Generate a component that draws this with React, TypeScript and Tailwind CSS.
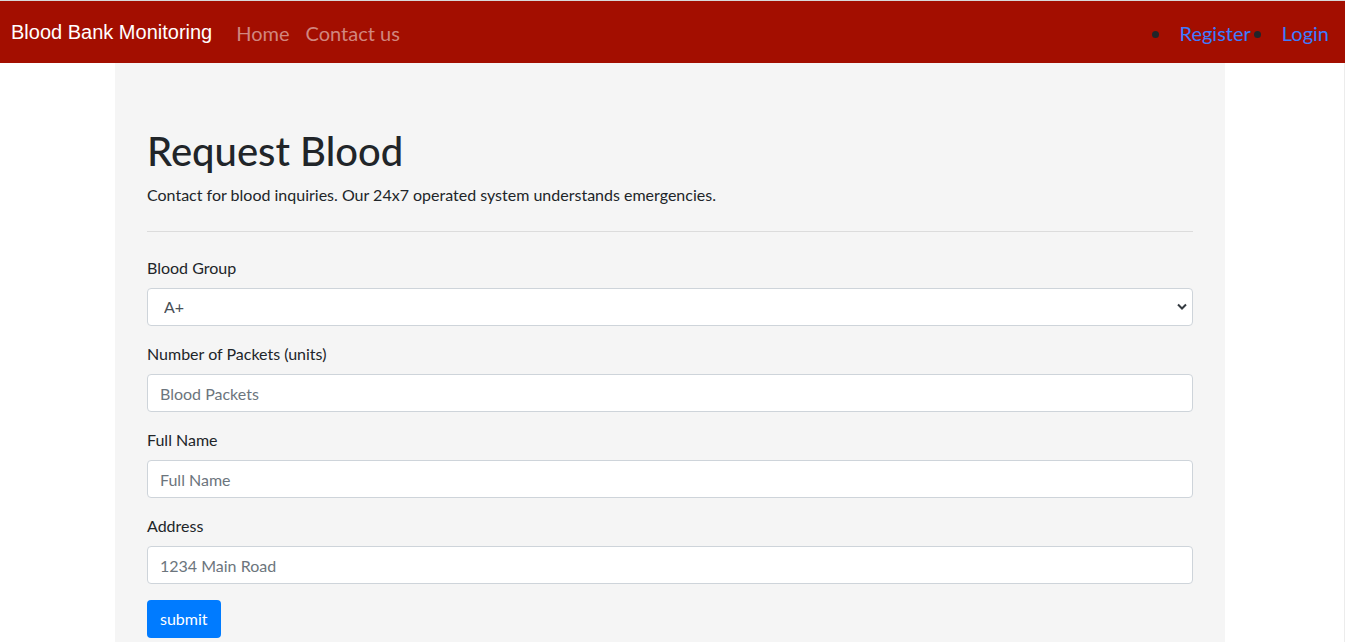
import React from 'react';

const FONT = "font-['Lato',sans-serif]";

const FIELDS = [
  { label: 'Number of Packets (units)', placeholder: 'Blood Packets' },
  { label: 'Full Name', placeholder: 'Full Name' },
  { label: 'Address', placeholder: '1234 Main Road' },
];

const Navbar = () => (
  <nav className="flex h-[62px] items-center bg-[#a30e00] pl-[11px] pr-2 pt-[2px]">
    <a className="mr-4 -mt-[2px] font-['Liberation_Sans',Arial,sans-serif] text-[20px] leading-[30px] text-white">
      Blood Bank Monitoring
    </a>
    <ul className="flex text-[20px]">
      <li><a className="block px-2 text-[#d1867f]">Home</a></li>
      <li><a className="block px-2 text-[#d1867f]">Contact us</a></li>
    </ul>
    <ul className="ml-auto flex list-disc text-[20px] text-[#212529]">
      <li className="ml-[20px]"><a className="block px-2 text-[#3d7bff]">Register</a></li>
      <li className="ml-[15px]"><a className="block px-2 text-[#3d7bff]">Login</a></li>
    </ul>
  </nav>
);

const Field = ({ label, placeholder }: { label: string; placeholder: string }) => (
  <div className="mb-4">
    <label className="mb-2 block">{label}</label>
    <input
      type="text"
      placeholder={placeholder}
      className="block h-[38px] w-full rounded-[4px] border border-[#ced4da] bg-white px-3 text-[#495057] placeholder:text-[#6c757d] outline-none"
    />
  </div>
);

export default function App() {
  return (
    <div className={`${FONT} min-h-[642px] border-t border-[#d8d8d8] bg-white text-[16px] leading-6 text-[#212529]`}>
      <Navbar />
      <div className="border-r border-[#ececec]">
        <div className="ml-[115px] w-[1110px] bg-[#f5f5f5] px-8 pt-16 pb-8">
          <h1 className="mb-2 text-[40px] font-medium leading-[48px]">Request Blood</h1>
          <p>Contact for blood inquiries. Our 24x7 operated system understands emergencies.</p>
          <hr className="my-6 border-t border-black/10" />
          <form>
            <div className="mb-4">
              <label className="mb-2 block">Blood Group</label>
              <div className="relative">
                <select className="block h-[38px] w-full appearance-none rounded-[4px] border border-[#ced4da] bg-white pl-4 pr-7 text-[#495057] outline-none">
                  <option>A+</option>
                  <option>A-</option>
                  <option>B+</option>
                  <option>B-</option>
                  <option>AB+</option>
                  <option>AB-</option>
                  <option>O+</option>
                  <option>O-</option>
                </select>
                <svg className="pointer-events-none absolute right-[6px] top-[15px]" width="10" height="7" viewBox="0 0 10 7">
                  <path d="M1 1.5l4 4 4-4" fill="none" stroke="#343a40" strokeWidth="2" />
                </svg>
              </div>
            </div>
            {FIELDS.map((f) => (
              <Field key={f.label} label={f.label} placeholder={f.placeholder} />
            ))}
            <button type="button" className="h-[38px] rounded-[4px] bg-[#007bff] px-[13px] text-white">
              submit
            </button>
          </form>
        </div>
      </div>
    </div>
  );
}
